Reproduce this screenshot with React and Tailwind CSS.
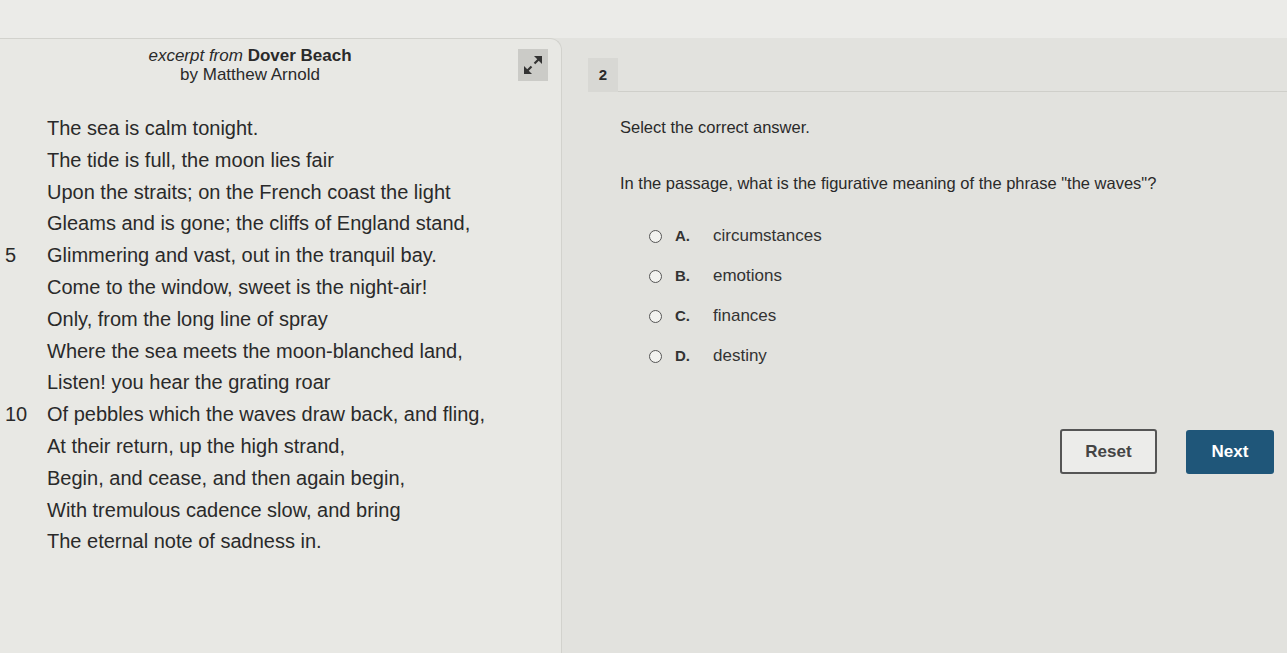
import React from "react";

const poem = [
  { n: "", t: "The sea is calm tonight." },
  { n: "", t: "The tide is full, the moon lies fair" },
  { n: "", t: "Upon the straits; on the French coast the light" },
  { n: "", t: "Gleams and is gone; the cliffs of England stand," },
  { n: "5", t: "Glimmering and vast, out in the tranquil bay." },
  { n: "", t: "Come to the window, sweet is the night-air!" },
  { n: "", t: "Only, from the long line of spray" },
  { n: "", t: "Where the sea meets the moon-blanched land," },
  { n: "", t: "Listen! you hear the grating roar" },
  { n: "10", t: "Of pebbles which the waves draw back, and fling," },
  { n: "", t: "At their return, up the high strand," },
  { n: "", t: "Begin, and cease, and then again begin," },
  { n: "", t: "With tremulous cadence slow, and bring" },
  { n: "", t: "The eternal note of sadness in." },
];

const options = [
  { k: "A.", v: "circumstances" },
  { k: "B.", v: "emotions" },
  { k: "C.", v: "finances" },
  { k: "D.", v: "destiny" },
];

const ExpandIcon = () => (
  <svg width="24" height="24" viewBox="0 0 24 24">
    <line x1="5" y1="19" x2="10.5" y2="13.5" stroke="#333" strokeWidth="2.2" />
    <line x1="13.5" y1="10.5" x2="19" y2="5" stroke="#333" strokeWidth="2.2" />
    <polygon points="3,21 3,13 11,21" fill="#333" />
    <polygon points="21,3 21,11 13,3" fill="#333" />
  </svg>
);

export default function App() {
  return (
    <div className="flex h-[653px] flex-col overflow-hidden bg-[#e2e2de] font-['Liberation_Sans',Arial,sans-serif] text-[#2a2a2a]">
      <div className="h-[38px] shrink-0 bg-[#ebebe8]" />

      <div className="flex flex-1">
        <section className="w-[562px] shrink-0 rounded-tr-[12px] border-r border-t border-[#d2d2cd] bg-[#e8e8e4]">
          <div className="flex items-start pt-[7px]">
            <div className="w-[500px] text-center text-[17px] leading-[19px]">
              <div>
                <span className="italic">excerpt from</span>{" "}
                <span className="font-bold">Dover Beach</span>
              </div>
              <div>by Matthew Arnold</div>
            </div>
            <div className="ml-[18px] mt-[3px] flex h-[32px] w-[30px] items-center justify-center bg-[#cbcbc7]">
              <ExpandIcon />
            </div>
          </div>

          <div className="mt-[29px] pl-[5px] text-[20px] leading-[31.8px]">
            {poem.map((line, i) => (
              <div key={i} className="flex">
                <span className="w-[42px] shrink-0">{line.n}</span>
                <span>{line.t}</span>
              </div>
            ))}
          </div>
        </section>

        <section className="flex flex-1 flex-col">
          <div className="flex pt-[20px]">
            <div className="ml-[26px] flex h-[34px] w-[30px] items-center justify-center bg-[#d8d8d4] text-[15px] font-bold">
              2
            </div>
            <div className="flex-1 border-b border-[#cfcfca]" />
          </div>

          <div className="pl-[58px] pr-[13px] text-[16.5px] leading-[20px]">
            <p className="mt-[25px]">Select the correct answer.</p>
            <p className="mt-[36px]">
              In the passage, what is the figurative meaning of the phrase "the waves"?
            </p>

            <div className="mt-[23px]">
              {options.map((o) => (
                <div key={o.k} className="flex h-[40px] items-center">
                  <span className="ml-[29px] h-[13px] w-[13px] rounded-full border-[1.5px] border-[#555] bg-[#f2f2ef]" />
                  <span className="ml-[13px] w-[38px] text-[15px] font-bold text-[#333]">{o.k}</span>
                  <span className="text-[17px] text-[#333]">{o.v}</span>
                </div>
              ))}
            </div>

            <div className="mt-[53px] flex items-center justify-end gap-[29px]">
              <button className="h-[45px] w-[97px] rounded-[3px] border-2 border-[#555] bg-[#ececea] text-[17px] font-bold text-[#444]">
                Reset
              </button>
              <button className="h-[44px] w-[88px] rounded-[3px] bg-[#1f5679] text-[17px] font-bold text-white">
                Next
              </button>
            </div>
          </div>
        </section>
      </div>
    </div>
  );
}
